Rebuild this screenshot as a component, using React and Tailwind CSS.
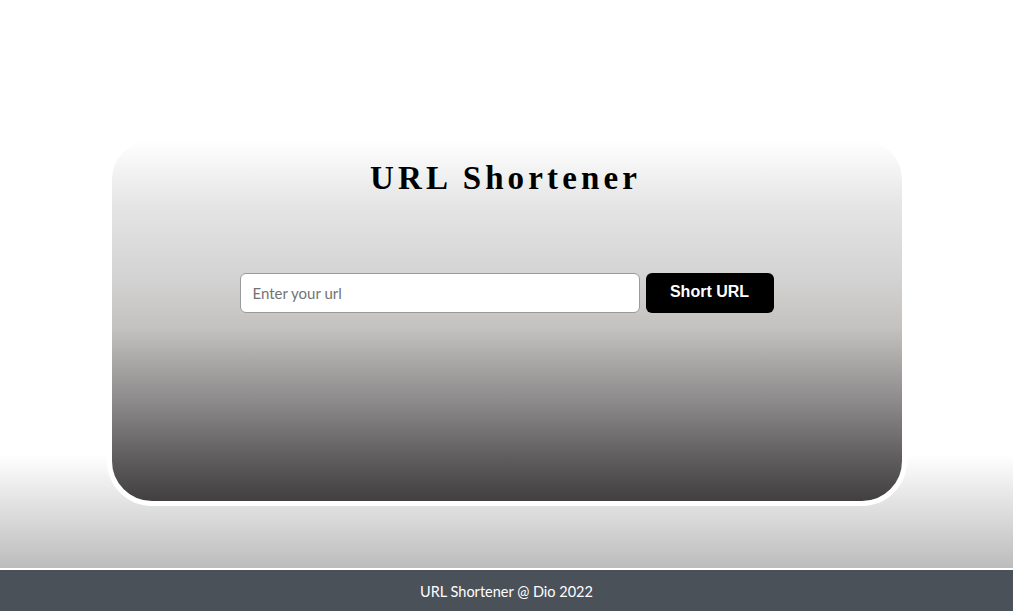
import React, { useState } from 'react';

const App = () => {
  const [url, setUrl] = useState('');

  return (
    <div className="flex flex-col h-[611px] w-full font-['Lato',sans-serif]">
      <main className="flex-1 flex justify-center bg-[linear-gradient(to_bottom,#ffffff_0%,#ffffff_80%,#bcbcbc_100%)] pt-[135px]">
        <section className="w-[800px] h-[371px] rounded-[45px] border-[5px] border-white bg-[linear-gradient(to_bottom,#ffffff_0%,#e6e5e6_18%,#d4d3d3_38%,#c3c2bf_52%,#8d8b8b_72%,#5f5d5d_88%,#423f40_100%)] flex flex-col items-center">
          <h1 className="mt-[16px] text-[33px] leading-[44px] font-bold tracking-[0.125em] text-black font-['Liberation_Serif',serif] pr-[2px]">
            URL Shortener
          </h1>
          <div className="mt-[73px] flex gap-[6px]">
            <input
              type="text"
              value={url}
              onChange={(e) => setUrl(e.target.value)}
              placeholder="Enter your url"
              className="w-[400px] h-[40px] rounded-[6px] border border-[#9a9a9a] bg-white px-3 text-[15px] text-gray-800 placeholder:text-[#737373] outline-none"
            />
            <button className="w-[128px] h-[40px] rounded-[6px] bg-black text-white text-[16px] font-bold font-['Liberation_Sans',sans-serif] pb-[2px]">
              Short URL
            </button>
          </div>
        </section>
      </main>
      <footer className="h-[43px] border-t-2 border-white bg-[#4b5159] flex items-center justify-center pt-[3px] text-white text-[14.5px]">
        URL Shortener @ Dio 2022
      </footer>
    </div>
  );
};

export default App;
